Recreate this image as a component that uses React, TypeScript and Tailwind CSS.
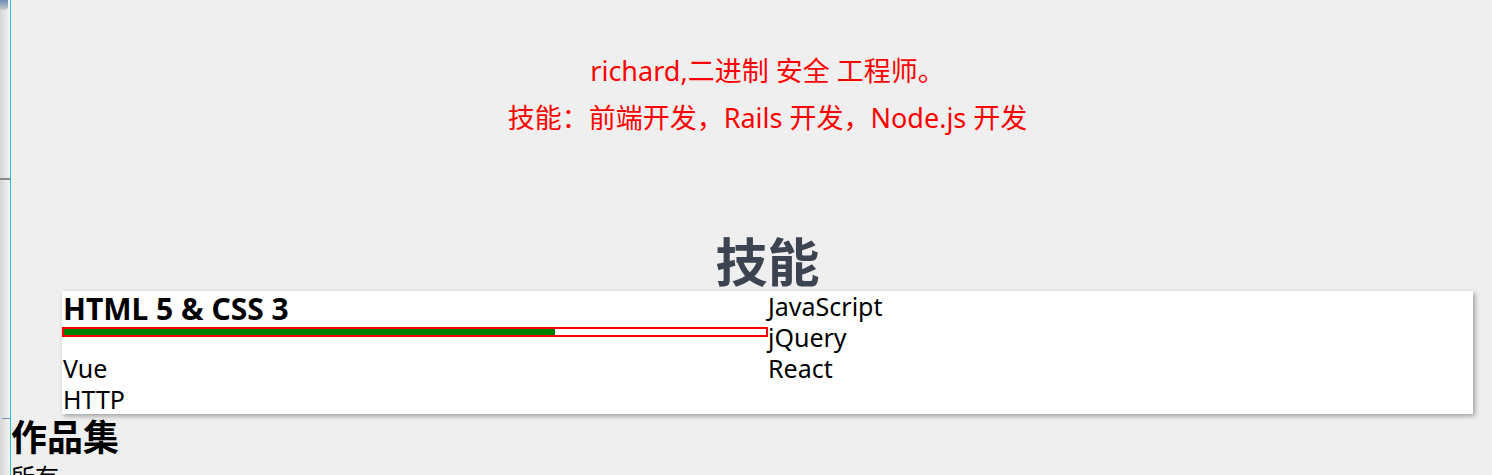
import React from "react"

const font = { fontFamily: '"Noto Sans", "Noto Sans CJK SC", sans-serif' }

const skills = [
  { name: "JavaScript", col: "col-start-2 row-start-1" },
  { name: "jQuery", col: "col-start-2 row-start-2" },
  { name: "Vue", col: "col-start-1 row-start-3" },
  { name: "React", col: "col-start-2 row-start-3" },
  { name: "HTTP", col: "col-start-1 row-start-4" },
]

export default function App() {
  return (
    <div className="flex min-h-screen bg-[#efefef] text-black" style={font}>
      {/* left frame strip */}
      <div className="relative w-[11px] shrink-0 border-r border-[#1ec8d8] bg-gradient-to-r from-[#d6d6d6] to-[#f4f4f4]">
        <div className="absolute left-0 top-0 h-[10px] w-[8px] bg-gradient-to-b from-[#6b8fb5] to-[#c9c9c9] rounded-br-sm" />
        <div className="absolute left-0 top-[178px] h-[2px] w-[10px] bg-[#8a8a8a]" />
        <div className="absolute left-[2px] top-[418px] h-[1px] w-[8px] bg-[#7a96b8]" />
      </div>

      <div className="flex-1">
        <div className="ml-[51px] w-[1411px]">
          {/* intro */}
          <div className="pt-[53px] text-center text-[27px] text-[#ff0000]">
            <p className="leading-[36px]">richard,二进制 安全 工程师。</p>
            <p className="mt-[11px] leading-[36px]">技能：前端开发，Rails 开发，Node.js 开发</p>
          </div>

          {/* skills */}
          <h2 className="mt-[97px] text-center text-[52px] font-bold leading-[58px] text-[#3d4451]">技能</h2>
          <div className="grid grid-cols-2 grid-rows-[31px_31px_31px_31px] bg-white pl-px shadow-[2px_2px_5px_rgba(0,0,0,0.35)] h-[123px]">
            <div className="col-start-1 row-start-1 row-span-2">
              <h3 className="text-[30px] font-bold leading-[36px]">HTML 5 &amp; CSS 3</h3>
              <div className="-ml-px h-[10px] border-2 border-[#ff0000] bg-white">
                <div className="h-full w-[70%] bg-[#008000]" />
              </div>
            </div>
            {skills.map((s) => (
              <div key={s.name} className={`${s.col} text-[25px] leading-[31px]`}>
                {s.name}
              </div>
            ))}
          </div>
        </div>

        {/* works */}
        <h2 className="mt-px text-[36px] font-bold leading-[46px]">作品集</h2>
        <div className="text-[24px] leading-[32px]">所有</div>
      </div>
    </div>
  )
}
